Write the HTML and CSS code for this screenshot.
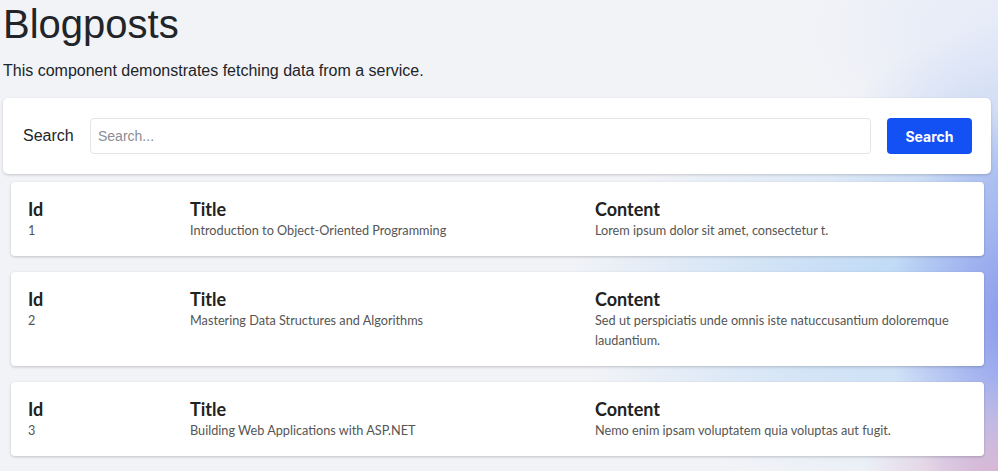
FILE: index.html
```html
<!DOCTYPE html>
<html lang="en">
<head>
<meta charset="utf-8">
<title>Blogposts</title>
<link rel="stylesheet" href="styles.css">
</head>
<body>
<main class="page">
  <h1 class="page-title">Blogposts</h1>
  <p class="page-lead">This component demonstrates fetching data from a service.</p>

  <section class="search-card">
    <label class="search-label" for="q">Search</label>
    <input class="search-input" id="q" type="text" placeholder="Search...">
    <button class="search-btn" type="button">Search</button>
  </section>

  <section class="posts">
    <article class="post">
      <div class="col col-id"><div class="col-head">Id</div><div class="col-val">1</div></div>
      <div class="col col-title"><div class="col-head">Title</div><div class="col-val">Introduction to Object-Oriented Programming</div></div>
      <div class="col col-content"><div class="col-head">Content</div><div class="col-val">Lorem ipsum dolor sit amet, consectetur t.</div></div>
    </article>
    <article class="post">
      <div class="col col-id"><div class="col-head">Id</div><div class="col-val">2</div></div>
      <div class="col col-title"><div class="col-head">Title</div><div class="col-val">Mastering Data Structures and Algorithms</div></div>
      <div class="col col-content"><div class="col-head">Content</div><div class="col-val">Sed ut perspiciatis unde omnis iste natuccusantium doloremque laudantium.</div></div>
    </article>
    <article class="post">
      <div class="col col-id"><div class="col-head">Id</div><div class="col-val">3</div></div>
      <div class="col col-title"><div class="col-head">Title</div><div class="col-val">Building Web Applications with ASP.NET</div></div>
      <div class="col col-content"><div class="col-head">Content</div><div class="col-val">Nemo enim ipsam voluptatem quia voluptas aut fugit.</div></div>
    </article>
  </section>
</main>
</body>
</html>
```
FILE: styles.css
```css
* { box-sizing: border-box; }

html, body {
  margin: 0;
  height: 100%;
}

body {
  font-family: "Liberation Sans", Arial, sans-serif;
  color: #212529;
  background-color: #f2f3f7;
  background-image:
    radial-gradient(ellipse 150px 120px at 1010px 495px, rgba(215,168,200,0.9), rgba(215,168,200,0) 100%),
    radial-gradient(ellipse 120px 210px at 1010px 320px, rgba(135,148,235,0.95), rgba(135,148,235,0) 100%),
    radial-gradient(ellipse 340px 190px at 900px 300px, rgba(175,210,245,0.85), rgba(175,210,245,0) 100%),
    radial-gradient(ellipse 180px 150px at 1010px 175px, rgba(175,198,242,0.8), rgba(175,198,242,0) 100%),
    radial-gradient(ellipse 200px 130px at 1000px 30px, rgba(228,234,248,0.95), rgba(228,234,248,0) 100%);
  background-repeat: no-repeat;
  overflow: hidden;
}

.page {
  padding: 0 7px 0 3px;
}

.page-title {
  margin: 0 0 11px 0;
  font-size: 40px;
  line-height: 48px;
  font-weight: 400;
}

.page-lead {
  margin: 0 0 15px 0;
  font-size: 16px;
  line-height: 24px;
}

.search-card {
  display: flex;
  align-items: center;
  gap: 16px;
  background: #fff;
  border-radius: 5px;
  padding: 20px 19px 20px 20px;
  box-shadow: 0 1px 3px rgba(0,0,0,0.18);
}

.search-label {
  font-size: 16px;
  color: #212529;
  width: 51px;
}

.search-input {
  flex: 1;
  height: 36px;
  border: 1px solid #e3e4e8;
  border-radius: 4px;
  padding: 0 7px;
  font-family: "Liberation Sans", Arial, sans-serif;
  font-size: 14px;
  color: #212529;
  outline: none;
}
.search-input::placeholder { color: #8a8d93; }

.search-btn {
  width: 85px;
  height: 36px;
  border: 0;
  border-radius: 4px;
  background: #1351f4;
  color: #fff;
  font-family: Inter, "Liberation Sans", sans-serif;
  font-weight: 700;
  font-size: 14px;
}

.posts {
  display: flex;
  flex-direction: column;
  gap: 16px;
  padding: 8px 7px 0 8px;
}

.post {
  display: grid;
  grid-template-columns: 162px 405px 1fr;
  background: #fff;
  border-radius: 4px;
  padding: 16px 16px 16px 17px;
  box-shadow: 0 1px 3px rgba(0,0,0,0.2);
  font-family: Lato, "Noto Sans", sans-serif;
}

.col-head {
  font-size: 18px;
  line-height: 22px;
  font-weight: 700;
  color: #222;
}

.col-val {
  font-size: 12.7px;
  line-height: 20px;
  color: #555;
}
```
